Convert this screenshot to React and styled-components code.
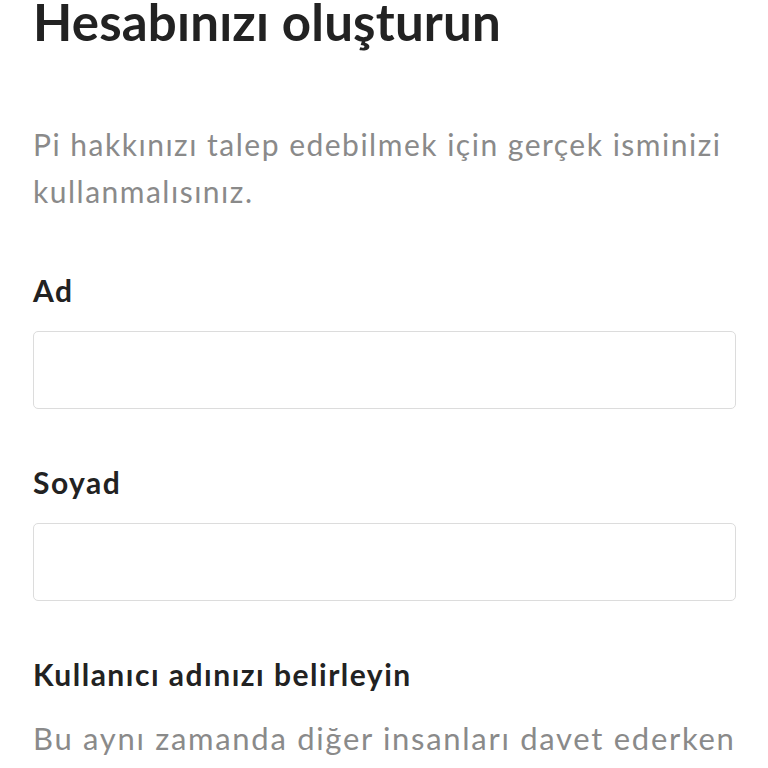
import React, { useState } from "react";
import styled, { createGlobalStyle } from "styled-components";

const GlobalStyle = createGlobalStyle`
  html, body {
    margin: 0;
    padding: 0;
    background: #ffffff;
  }
  * {
    box-sizing: border-box;
  }
`;

const Page = styled.div`
  width: 768px;
  height: 768px;
  overflow: hidden;
  padding: 0 32px 0 33px;
  font-family: "Lato", "Noto Sans", sans-serif;
  color: #222222;
`;

const Title = styled.h1`
  margin: 0;
  font-size: 51px;
  line-height: 44px;
  font-weight: 700;
  letter-spacing: 0.2px;
  color: #222222;
`;

const Intro = styled.p`
  margin: 77px 0 0;
  font-size: 30px;
  line-height: 47px;
  font-weight: 400;
  letter-spacing: 1.5px;
  color: #8a8a8a;
`;

const Field = styled.div`
  display: flex;
  flex-direction: column;
  gap: 23px;
  margin-top: ${(p) => p.$top}px;
`;

const Label = styled.label`
  font-size: 30px;
  line-height: 36px;
  font-weight: 700;
  letter-spacing: 1.5px;
  color: #222222;
`;

const Input = styled.input`
  width: 100%;
  height: 78px;
  padding: 0 20px;
  border: 1.5px solid #dcdcdc;
  border-radius: 5px;
  font-family: inherit;
  font-size: 30px;
  color: #222222;
  background: #ffffff;
  outline: none;
`;

const Hint = styled.p`
  margin: 23px 0 0;
  font-size: 31px;
  line-height: 47px;
  letter-spacing: 1.7px;
  color: #8a8a8a;
`;

export default function App() {
  const [datos, setDatos] = useState({ ad: "", soyad: "" });

  const handleChange = (e) => {
    setDatos({ ...datos, [e.target.name]: e.target.value });
  };

  return (
    <>
      <GlobalStyle />
      <Page>
        <Title>Hesabınızı oluşturun</Title>
        <Intro>
          Pi hakkınızı talep edebilmek için gerçek isminizi kullanmalısınız.
        </Intro>

        <Field $top={57}>
          <Label htmlFor="ad">Ad</Label>
          <Input id="ad" name="ad" value={datos.ad} onChange={handleChange} />
        </Field>

        <Field $top={55}>
          <Label htmlFor="soyad">Soyad</Label>
          <Input
            id="soyad"
            name="soyad"
            value={datos.soyad}
            onChange={handleChange}
          />
        </Field>

        <Field $top={55}>
          <Label>Kullanıcı adınızı belirleyin</Label>
        </Field>
        <Hint>Bu aynı zamanda diğer insanları davet ederken</Hint>
      </Page>
    </>
  );
}
